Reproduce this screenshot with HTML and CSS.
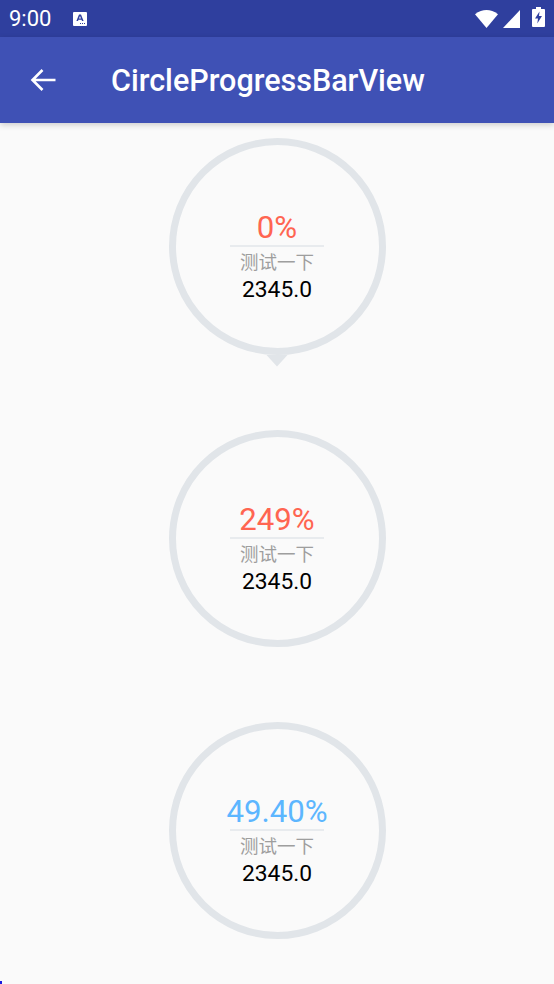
FILE: index.html
```html
<!DOCTYPE html>
<html>
    <head>
        <meta charset="utf-8">
        <title>CircleProgressBarView</title>
        <meta name="viewport" content="width=device-width, initial-scale=1.0">
        <link rel="stylesheet" href="styles.css">
    </head>
    <body>
        <div class="status-bar">
            <span class="status-bar__time">9:00</span>
            <svg class="status-bar__note" width="14" height="14" viewBox="0 0 14 14">
                <path fill="#fff" d="M1 0h12a1 1 0 0 1 1 1v12a1 1 0 0 1-1 1H1a1 1 0 0 1-1-1V1a1 1 0 0 1 1-1z"/>
                <path fill="#2f3f9e" d="M6 2.500h2l2.600 6.500H9L8.500 7.700h-3L5 9H3.400zM6 6.400h2L7 3.900zM7 11h1v1H7zM9 11h1v1H9zM11 11h1v1h-1z"/>
            </svg>
            <div class="status-bar__icons">
                <svg class="status-bar__wifi" width="23" height="18" viewBox="0 0 24 18" preserveAspectRatio="none"><path fill="#fff" d="M0 4.300Q12-4.100 24 4.300L12 18z"/></svg>
                <svg class="status-bar__signal" width="17" height="18" viewBox="0 0 18 18" preserveAspectRatio="none"><path fill="#fff" d="M18 0v18H0z"/></svg>
                <svg class="status-bar__battery" width="13" height="20" viewBox="0 0 13 20">
                    <path fill="#fff" d="M4 0h5v2h3a1 1 0 0 1 1 1v16a1 1 0 0 1-1 1H1a1 1 0 0 1-1-1V3a1 1 0 0 1 1-1h3z"/>
                    <path fill="#2f3f9e" d="M7.500 4.500L3 11.500h3l-.7 5 4.700-7.500H7z"/>
                </svg>
            </div>
        </div>
        <header class="app-bar">
            <svg class="app-bar__back" width="26" height="24" viewBox="0 0 26 24">
                <path fill="none" stroke="#fff" stroke-width="2.600" d="M25.500 12H2.500M12.500 2L2.500 12l10 10"/>
            </svg>
            <h1 class="app-bar__title">CircleProgressBarView</h1>
        </header>
        <main class="list">
            <div class="gauge gauge--pointer">
                <div class="gauge__value gauge__value--red">0%</div>
                <div class="gauge__label">测试一下</div>
                <div class="gauge__amount">2345.0</div>
            </div>
            <div class="gauge">
                <div class="gauge__value gauge__value--red">249%</div>
                <div class="gauge__label">测试一下</div>
                <div class="gauge__amount">2345.0</div>
            </div>
            <div class="gauge">
                <div class="gauge__value gauge__value--blue">49.40%</div>
                <div class="gauge__label">测试一下</div>
                <div class="gauge__amount">2345.0</div>
            </div>
        </main>
        <div class="corner-mark"></div>
    </body>
</html>
```

FILE: styles.css
```css
:root {
    --font-main: Roboto, "Liberation Sans", sans-serif;
    --font-cjk: "Noto Sans CJK SC", sans-serif;

    --color-status: #2f3f9e;
    --color-bar: #3f51b5;
    --color-page: #fafafa;
    --color-ring: #e1e5e9;
    --color-red: #ff6551;
    --color-blue: #5cb6ff;
    --color-label: #9e9e9e;
}
* {
    box-sizing: border-box;
}
html, body {
    height: 100%;
}
body {
    margin: 0;
    position: relative;
    overflow: hidden;
    background-color: var(--color-page);
    font-family: var(--font-main);
}
.status-bar {
    display: flex;
    align-items: center;
    height: 37px;
    padding: 0 9px;
    background-color: var(--color-status);
    color: #fff;
}
.status-bar__time {
    font-size: 22px;
    line-height: 37px;
}
.status-bar__note {
    margin-left: 22px;
}
.status-bar__icons {
    display: flex;
    align-items: center;
    gap: 5px;
    margin-left: auto;
}
.status-bar__battery {
    margin: 0 0 3px 7px;
}
.app-bar {
    position: relative;
    display: flex;
    align-items: center;
    height: 86px;
    padding-left: 30px;
    background-color: var(--color-bar);
    box-shadow: 0 2px 6px rgba(0, 0, 0, 0.18);
}
.app-bar__title {
    margin: 0 0 0 55px;
    color: #fff;
    font-size: 30.500px;
    font-weight: 500;
    white-space: nowrap;
}
.list {
    display: flex;
    flex-direction: column;
    align-items: center;
    gap: 75px;
    padding-top: 15px;
}
.gauge {
    position: relative;
    display: flex;
    flex-direction: column;
    align-items: center;
    width: 217px;
    height: 217px;
    padding-top: 65.500px;
    border: 7.500px solid var(--color-ring);
    border-radius: 50%;
}
.gauge--pointer::after {
    content: '';
    position: absolute;
    left: 50%;
    bottom: -18.500px;
    width: 22px;
    height: 12px;
    margin-left: -11px;
    background-color: var(--color-ring);
    clip-path: polygon(0 0, 100% 0, 50% 100%);
}
.gauge__value {
    display: flex;
    justify-content: center;
    width: 94px;
    height: 36px;
    border-bottom: 2px solid #e8ebee;
    font-size: 31.200px;
    line-height: 33px;
    white-space: nowrap;
}
.gauge__value--red {
    color: var(--color-red);
}
.gauge__value--blue {
    color: var(--color-blue);
}
.gauge__label {
    margin-top: 1px;
    color: var(--color-label);
    font-family: var(--font-cjk);
    font-size: 18.500px;
    line-height: 26px;
}
.gauge__amount {
    color: #000;
    font-size: 22.800px;
    line-height: 28px;
    margin-top: 2px;
}
.corner-mark {
    position: absolute;
    left: 0;
    bottom: 0;
    width: 2px;
    height: 3px;
    background-color: #1a1ae0;
}
```
